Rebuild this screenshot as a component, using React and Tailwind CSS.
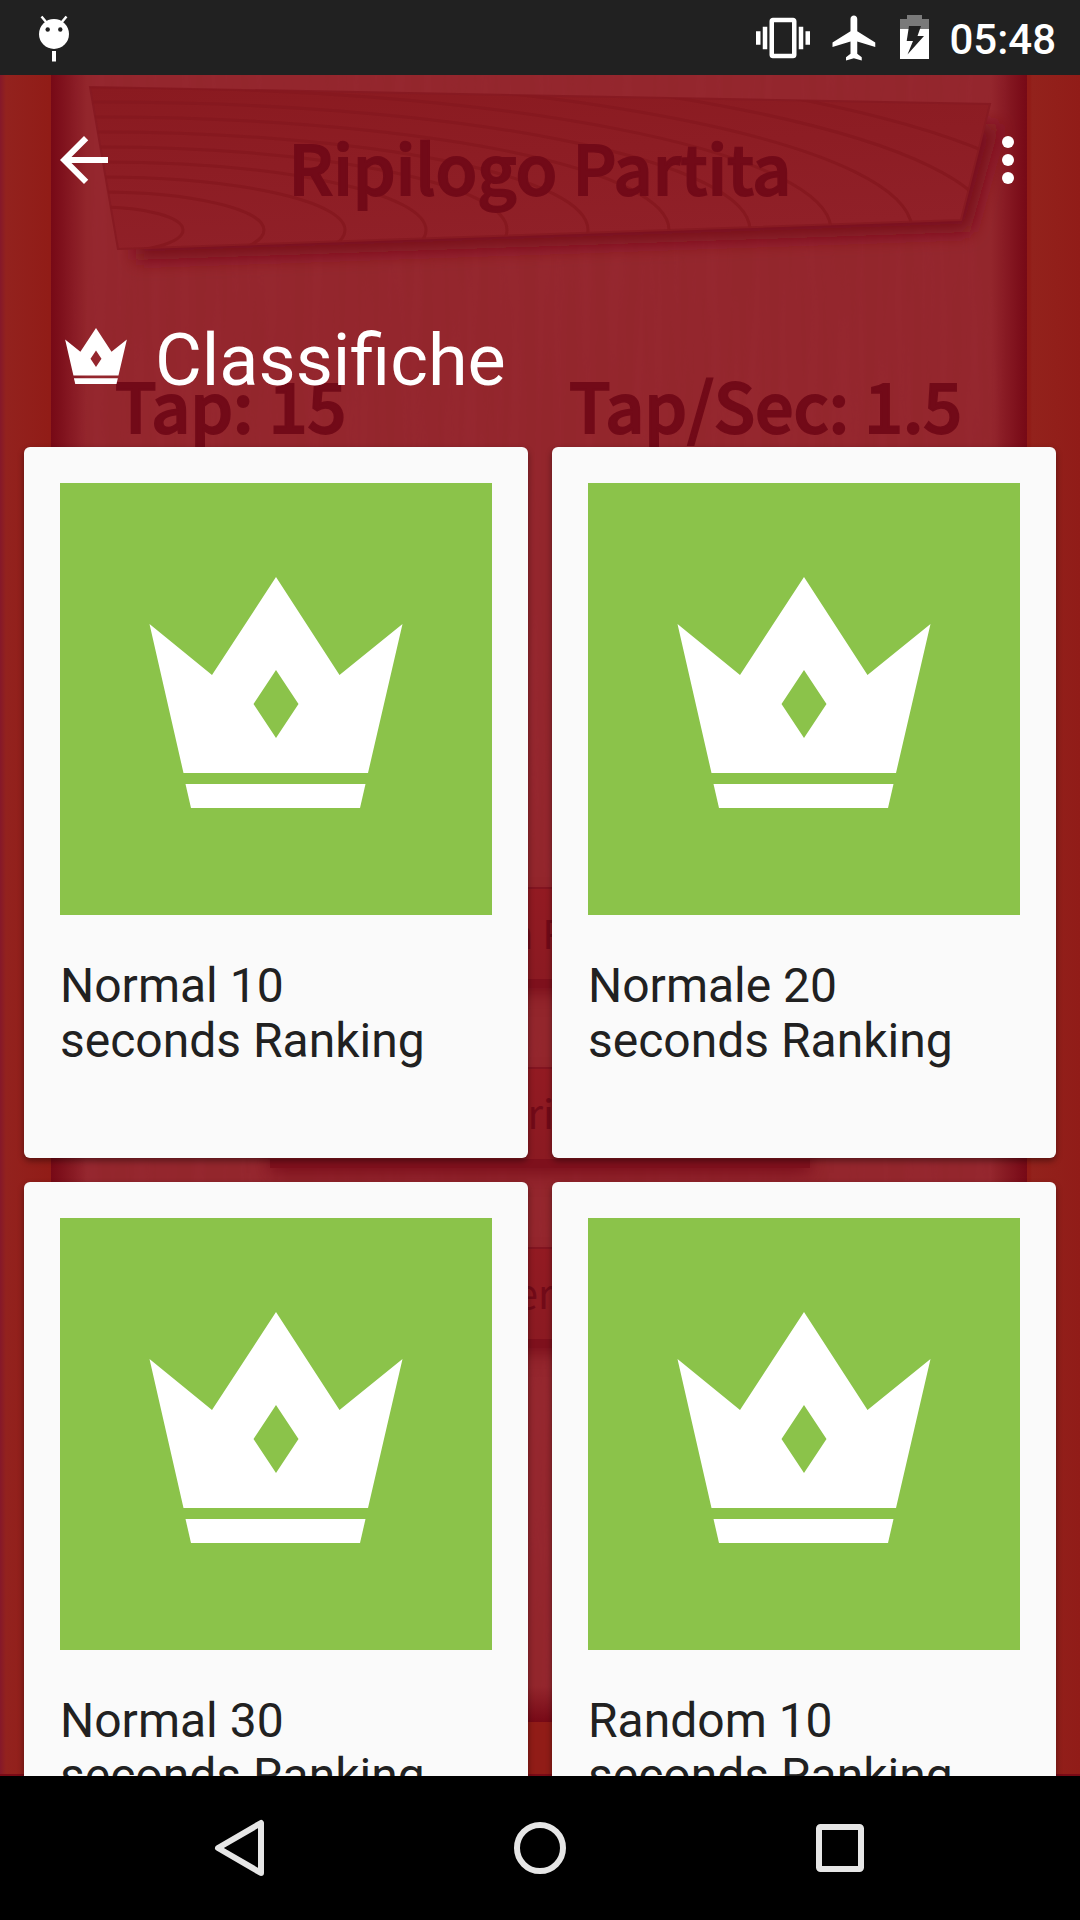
import React from 'react';

const leaderboards = [
  { id: 1, name: 'Normal 10 seconds Ranking' },
  { id: 2, name: 'Normale 20 seconds Ranking' },
  { id: 3, name: 'Normal 30 seconds Ranking' },
  { id: 4, name: 'Random 10 seconds Ranking' },
];

const gameButtons = ['Nuova Partita', 'Menu Principale', 'Internet'];

const rings = [0, 1, 2, 3, 4, 5, 6, 7, 8, 9, 10, 11];

const CrownShape = () => (
  <>
    <path
      fillRule="evenodd"
      d="M216 94L279.500 192L342.500 141L308 290H123.500L89.500 141L152 192ZM216 187L193.500 221L216 255L238.500 221Z"
    />
    <path d="M125.500 301H305.500L300 325H131Z" />
  </>
);

const StatusBar = () => (
  <header className="flex h-[75px] shrink-0 items-center justify-between bg-[#212121] pr-6 pl-9 text-white">
    <svg className="h-[75px] w-9" viewBox="36 0 36 75" fill="currentColor">
      <circle cx="54" cy="34" r="15" />
      <path d="M41.500 16.500l5 6M66.500 16.500l-5 6" stroke="currentColor" strokeWidth="2.500" />
      <circle cx="47.700" cy="29.500" r="2.200" fill="#212121" />
      <circle cx="60.300" cy="29.500" r="2.200" fill="#212121" />
      <path d="M52 51h4v10.500h-4z" />
    </svg>
    <div className="flex items-center gap-[18px]">
      <svg className="h-[54px] w-[54px]" viewBox="0 0 24 24" fill="currentColor">
        <path d="M0 15h2V9H0v6zm3 2h2V7H3v10zm19-8v6h2V9h-2zm-3 8h2V7h-2v10zM16.500 3h-9C6.670 3 6 3.670 6 4.500v15c0 .83.67 1.500 1.500 1.500h9c.83 0 1.500-.67 1.500-1.500v-15c0-.83-.67-1.500-1.500-1.500zM16 19H8V5h8v14z" />
      </svg>
      <svg className="h-[54px] w-[54px]" viewBox="0 0 24 24" fill="currentColor">
        <path d="M21 16v-2l-8-5V3.500c0-.83-.67-1.500-1.500-1.500S10 2.670 10 3.500V9l-8 5v2l8-2.500V19l-2 1.500V22l3.500-1 3.500 1v-1.500L13 19v-5.500l8 2.500z" />
      </svg>
      <svg className="h-[75px] w-[29px]" viewBox="899 0 29 75" fill="currentColor">
        <path d="M899 19h7v-4h15v4h7v11h-29z" fill="#7a7a7a" />
        <path d="M899 29h29v30h-29z" />
        <path d="M908 26h12l-3.500 10h6.500l-16.500 18.500l5.500-13.500h-6.300z" fill="#212121" />
      </svg>
      <span className="pt-1 pl-0.5 font-[Roboto,sans-serif] text-[42px] leading-[48px] font-medium">05:48</span>
    </div>
  </header>
);

// Wooden sign behind the match summary title
const Sign = () => (
  <svg className="absolute inset-x-0 top-0 h-[225px] w-full" viewBox="0 75 1080 225" preserveAspectRatio="none">
    <defs>
      <clipPath id="sign">
        <path d="M90 87L990 104L961 220L118 249Z" />
      </clipPath>
      <linearGradient id="signFill" x1="0" y1="0" x2="0.3" y2="1">
        <stop offset="0" stopColor="#8a1a20" />
        <stop offset="1" stopColor="#902028" />
      </linearGradient>
      <filter id="soft" x="-10%" y="-10%" width="120%" height="130%">
        <feGaussianBlur stdDeviation="9" />
      </filter>
    </defs>
    <path d="M136 130L1000 124L970 232L136 260Z" fill="#780d1a" filter="url(#soft)" />
    <path d="M90 87L990 104L961 220L118 249Z" fill="url(#signFill)" stroke="#871a22" strokeWidth="2" />
    <g clipPath="url(#sign)" fill="none" stroke="#86181f" strokeWidth="3">
      {rings.map((k) => (
        <ellipse key={k} cx="100" cy="230" rx={83 + 81 * k} ry={23 + 15 * k} />
      ))}
    </g>
  </svg>
);

const GameBackdrop = () => (
  <div
    aria-hidden="true"
    className="absolute inset-0 flex flex-col overflow-hidden border-b-2 border-[#7a0a16] bg-[linear-gradient(90deg,#85182a,#93221e_6px,#911c17_50px,#911c17_1030px,#93221c_1032px,#911c18)] font-['Noto_Sans_CJK_SC',sans-serif] text-[#720a18]"
  >
    <div className="absolute inset-x-[51px] top-0 bottom-[52px] mr-[2px] bg-[#93262c]">
      <svg className="h-full w-full opacity-10" preserveAspectRatio="none">
        <filter id="grain">
          <feTurbulence type="fractalNoise" baseFrequency="0.07 0.004" numOctaves="3" seed="4" />
          <feColorMatrix values="0 0 0 0 0.48  0 0 0 0 0.04  0 0 0 0 0.1  1.4 0 0 0 -0.4" />
        </filter>
        <rect width="100%" height="100%" filter="url(#grain)" />
      </svg>
      <div className="absolute inset-0 bg-[linear-gradient(90deg,#770916,#770916cc_8px,#77091600_36px),linear-gradient(270deg,#770916,#770916cc_8px,#77091600_36px),linear-gradient(0deg,#770916,#77091600_36px)]" />
    </div>
    <Sign />
    <p className="relative mt-[45px] text-center text-[68px] leading-[92px] font-medium [-webkit-text-stroke:2px_#720a18]">
      Ripilogo Partita
    </p>
    <div className="relative mt-[146px] flex justify-between pr-[118px] pl-[115px] text-[68px] leading-[92px] font-medium [-webkit-text-stroke:2px_#720a18]">
      <span>Tap: 15</span>
      <span>Tap/Sec: 1.5</span>
    </div>
    <div className="relative mx-auto mt-[437px] flex w-1/2 flex-col gap-[88px]">
      {gameButtons.map((label) => (
        <div
          key={label}
          className="h-[92px] border-t-2 border-[#821420] bg-[linear-gradient(180deg,#921a22,#8b1a22)] text-center text-[40px] leading-[86px] shadow-[0_9px_0_#7e101c,0_14px_16px_#7a0e1b]"
        >
          {label}
        </div>
      ))}
    </div>
  </div>
);

const Leaderboards = () => (
  <div className="relative font-[Roboto,sans-serif]">
    <div className="flex h-[170px] items-center justify-between pr-9 pl-12 text-white">
      <button type="button" aria-label="Indietro">
        <svg className="h-[72px] w-[72px]" viewBox="0 0 24 24" fill="currentColor">
          <path d="M20 11H7.830l5.590-5.590L12 4l-8 8 8 8 1.410-1.410L7.830 13H20v-2z" />
        </svg>
      </button>
      <button type="button" aria-label="Altre opzioni">
        <svg className="h-[72px] w-[72px]" viewBox="0 0 24 24" fill="currentColor">
          <circle cx="12" cy="6" r="2" />
          <circle cx="12" cy="12" r="2" />
          <circle cx="12" cy="18" r="2" />
        </svg>
      </button>
    </div>

    <div className="mt-[74px] flex items-center gap-7 pl-[65px] text-white">
      <svg className="mb-2.5 h-14 w-[62px]" viewBox="89 94 254 231" preserveAspectRatio="none" fill="currentColor">
        <CrownShape />
      </svg>
      <h1 className="text-[72px] leading-[84px]">Classifiche</h1>
    </div>

    <div className="mt-11 grid grid-cols-2 gap-6 px-6">
      {leaderboards.map((board) => (
        <a
          key={board.id}
          href="#"
          className="rounded-md bg-[#fafafa] px-9 pt-9 pb-[90px] shadow-[0_3px_6px_rgba(0,0,0,0.4)]"
        >
          <svg className="w-full bg-[#8bc34a]" viewBox="0 0 432 432" fill="#fff">
            <CrownShape />
          </svg>
          <h2 className="mt-[43px] pr-[60px] text-[48px] leading-[55px] text-[#212121]">{board.name}</h2>
        </a>
      ))}
    </div>
  </div>
);

const NavigationBar = () => (
  <nav className="grid h-36 shrink-0 grid-cols-3 place-items-center bg-black px-[90px] text-[#e6e6e6]">
    <button type="button" aria-label="Back">
      <svg className="h-[72px] w-[72px]" viewBox="0 0 72 72" fill="none" stroke="currentColor" strokeWidth="6" strokeLinejoin="round">
        <path d="M57 11V61L14 36Z" />
      </svg>
    </button>
    <button type="button" aria-label="Home">
      <svg className="h-[72px] w-[72px]" viewBox="0 0 72 72" fill="none" stroke="currentColor" strokeWidth="6">
        <circle cx="36" cy="36" r="23" />
      </svg>
    </button>
    <button type="button" aria-label="Recenti">
      <svg className="h-[72px] w-[72px]" viewBox="0 0 72 72" fill="none" stroke="currentColor" strokeWidth="6">
        <rect x="15" y="15" width="42" height="42" rx="1.500" />
      </svg>
    </button>
  </nav>
);

const App = () => {
  return (
    <div className="flex h-screen flex-col overflow-hidden bg-black">
      <StatusBar />
      <main className="relative min-h-0 flex-1 overflow-hidden">
        <GameBackdrop />
        <Leaderboards />
      </main>
      <NavigationBar />
    </div>
  );
};

export default App;
